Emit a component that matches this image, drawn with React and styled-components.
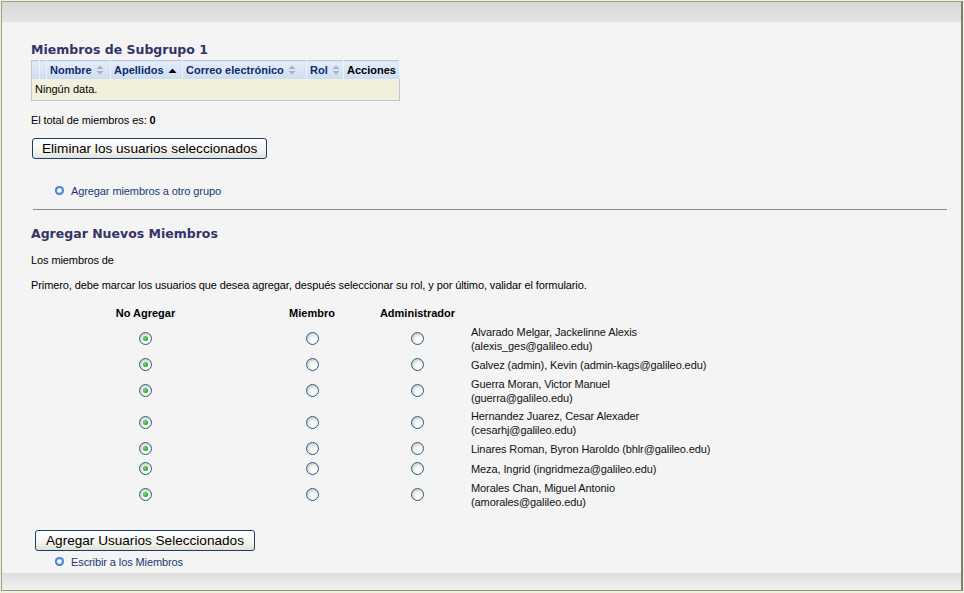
import React from "react";
import styled, { createGlobalStyle } from "styled-components";

const Global = createGlobalStyle`
  html, body { margin: 0; padding: 0; background: #e9f3dc; }
  body { font-family: "Liberation Sans", Arial, sans-serif; font-size: 11px; color: #000; }
`;

const Frame = styled.div`
  margin: 1px 0 0 1px;
  width: 959px;
  height: 588px;
  border: 1px solid #9aa08c;
  border-right: 2px solid #7e7e78;
  border-bottom: 1px solid #8c9480;
  background: #f4f4f4;
  display: flex;
  flex-direction: column;
  box-sizing: content-box;
`;

const TopBand = styled.div`
  height: 20px;
  background: linear-gradient(#d8d8d8, #e4e4e4);
  flex: none;
`;

const Content = styled.div`
  flex: 1;
  padding: 0 16px 0 29px;
`;

const BottomBand = styled.div`
  height: 17px;
  background: linear-gradient(#dedede, #e6e6e6 40%, #f0f0f0);
  flex: none;
`;

const Heading = styled.h2`
  margin: ${(p) => p.$top}px 0 0 0;
  font-family: "DejaVu Sans", Verdana, sans-serif;
  font-weight: bold;
  font-size: 12.5px;
  line-height: 16px;
  color: #333366;
`;

const DataTable = styled.table`
  margin-top: 2px;
  border-collapse: collapse;
  border: 1px solid #bcc6d4;
  width: 369px;
`;

const HeadCell = styled.th`
  height: 18px;
  padding: 0 3px;
  text-align: left;
  font-size: 11px;
  font-weight: bold;
  color: ${(p) => (p.$plain ? "#000" : "#0b2a6a")};
  background: linear-gradient(#e3edf9, #cddcf1);
  border-right: 1px solid #edf3fb;
  white-space: nowrap;
  width: ${(p) => (p.$w ? `${p.$w}px` : "auto")};
  box-sizing: border-box;
`;

const SortIcon = styled.svg`
  margin-left: 4px;
  vertical-align: -1px;
`;

const BodyCell = styled.td`
  background: #f0f0dc;
  height: 21px;
  padding: 0 3px;
  font-size: 11px;
`;

const Text = styled.p`
  margin: ${(p) => p.$top}px 0 0 0;
  font-size: 11px;
  line-height: 14px;
  letter-spacing: -0.1px;
`;

const Button = styled.button`
  display: block;
  margin: ${(p) => p.$top}px 0 0 ${(p) => p.$left || 0}px;
  height: 21px;
  padding: 0 ${(p) => p.$pad || 9}px;
  font-family: "Liberation Sans", Arial, sans-serif;
  font-size: 13.6px;
  color: #000;
  border: 1px solid #1e3c66;
  border-radius: 3px;
  background: linear-gradient(#ffffff, #f3f3ef 60%, #e2e2da);
  cursor: pointer;
`;

const LinkRow = styled.div`
  display: flex;
  align-items: center;
  gap: 7px;
  margin: ${(p) => p.$top}px 0 0 24px;
  height: 14px;
`;

const Bullet = styled.span`
  width: 9px;
  height: 9px;
  border-radius: 50%;
  background: radial-gradient(circle at 50% 50%, #fff 0 1.6px, #9cc4f4 2.2px, #4a88dc 3.4px, #2f6cc6 4.5px);
  flex: none;
`;

const LinkText = styled.a`
  color: #173a78;
  font-size: 11px;
  letter-spacing: -0.1px;
  text-decoration: none;
`;

const Rule = styled.hr`
  margin: 11px 0 0 2px;
  border: 0;
  border-top: 1px solid #8a8a8a;
  height: 0;
  width: 914px;
`;

const MembersTable = styled.table`
  margin-top: 11px;
  border-collapse: collapse;
  table-layout: fixed;
  width: 681px;
`;

const MCol = styled.col`
  width: ${(p) => p.$w}px;
`;

const MHead = styled.th`
  height: 20px;
  padding: 0;
  font-size: 11px;
  font-weight: bold;
  text-align: center;
`;

const MCell = styled.td`
  padding: 2px 0;
  line-height: 14px;
  font-size: 11px;
  letter-spacing: -0.1px;
  text-align: left;
  vertical-align: middle;
  color: #111;
`;

const RadioBox = styled.div`
  height: 16px;
  display: flex;
  align-items: center;
  justify-content: center;
`;

const Radio = styled.span`
  display: block;
  position: relative;
  width: 11px;
  height: 11px;
  border-radius: 50%;
  border: 1px solid #2e5f8f;
  background: radial-gradient(circle at 60% 65%, #ffffff 0 2px, #e8e8e2 5px, #cfd0c8 7px);
  &::after {
    content: "";
    display: ${(p) => (p.$on ? "block" : "none")};
    position: absolute;
    left: 3px;
    top: 3px;
    width: 5px;
    height: 5px;
    border-radius: 50%;
    background: radial-gradient(circle at 40% 40%, #7ee07e, #1fa31f 70%);
  }
`;

const Sort = ({ active }) =>
  active ? (
    <SortIcon width="9" height="8" viewBox="0 0 9 8">
      <path d="M0.5 6 L4.5 1.5 L8.5 6 Z" fill="#000" />
    </SortIcon>
  ) : (
    <SortIcon width="8" height="10" viewBox="0 0 8 10">
      <path d="M0.5 4 L4 0.5 L7.5 4 Z" fill="#a7b0be" />
      <path d="M0.5 6 L4 9.5 L7.5 6 Z" fill="#a7b0be" />
    </SortIcon>
  );

const members = [
  "Alvarado Melgar, Jackelinne Alexis (alexis_ges@galileo.edu)",
  "Galvez (admin), Kevin (admin-kags@galileo.edu)",
  "Guerra Moran, Victor Manuel (guerra@galileo.edu)",
  "Hernandez Juarez, Cesar Alexader (cesarhj@galileo.edu)",
  "Linares Roman, Byron Haroldo (bhlr@galileo.edu)",
  "Meza, Ingrid (ingridmeza@galileo.edu)",
  "Morales Chan, Miguel Antonio (amorales@galileo.edu)",
];

export default function App() {
  return (
    <>
      <Global />
      <Frame>
        <TopBand />
        <Content>
          <Heading $top={20}>Miembros de Subgrupo 1</Heading>
          <DataTable>
            <thead>
              <tr>
                <HeadCell $w={8} />
                <HeadCell $w={6} />
                <HeadCell $w={64}>
                  Nombre
                  <Sort />
                </HeadCell>
                <HeadCell $w={72}>
                  Apellidos
                  <Sort active />
                </HeadCell>
                <HeadCell $w={124}>
                  Correo electrónico
                  <Sort />
                </HeadCell>
                <HeadCell $w={37}>
                  Rol
                  <Sort />
                </HeadCell>
                <HeadCell $plain>Acciones</HeadCell>
              </tr>
            </thead>
            <tbody>
              <tr>
                <BodyCell colSpan={7}>Ningún data.</BodyCell>
              </tr>
            </tbody>
          </DataTable>
          <Text $top={12}>
            El total de miembros es: <b>0</b>
          </Text>
          <Button $top={11} $left={1}>Eliminar los usuarios seleccionados</Button>
          <LinkRow $top={25}>
            <Bullet />
            <LinkText href="#">Agregar miembros a otro grupo</LinkText>
          </LinkRow>
          <Rule />
          <Heading $top={16}>Agregar Nuevos Miembros</Heading>
          <Text $top={11}>Los miembros de</Text>
          <Text $top={11}>
            Primero, debe marcar los usuarios que desea agregar, después seleccionar su rol, y por último, validar el
            formulario.
          </Text>
          <MembersTable>
            <colgroup>
              <MCol $w={229} />
              <MCol $w={104} />
              <MCol $w={107} />
              <MCol $w={241} />
            </colgroup>
            <thead>
              <tr>
                <MHead>No Agregar</MHead>
                <MHead>Miembro</MHead>
                <MHead>Administrador</MHead>
                <MHead />
              </tr>
            </thead>
            <tbody>
              {members.map((m) => (
                <tr key={m}>
                  <MCell>
                    <RadioBox>
                      <Radio $on />
                    </RadioBox>
                  </MCell>
                  <MCell>
                    <RadioBox>
                      <Radio />
                    </RadioBox>
                  </MCell>
                  <MCell>
                    <RadioBox>
                      <Radio />
                    </RadioBox>
                  </MCell>
                  <MCell>{m}</MCell>
                </tr>
              ))}
            </tbody>
          </MembersTable>
          <Button $top={19} $left={4} $pad={10}>Agregar Usuarios Seleccionados</Button>
          <LinkRow $top={4}>
            <Bullet />
            <LinkText href="#">Escribir a los Miembros</LinkText>
          </LinkRow>
        </Content>
        <BottomBand />
      </Frame>
    </>
  );
}
